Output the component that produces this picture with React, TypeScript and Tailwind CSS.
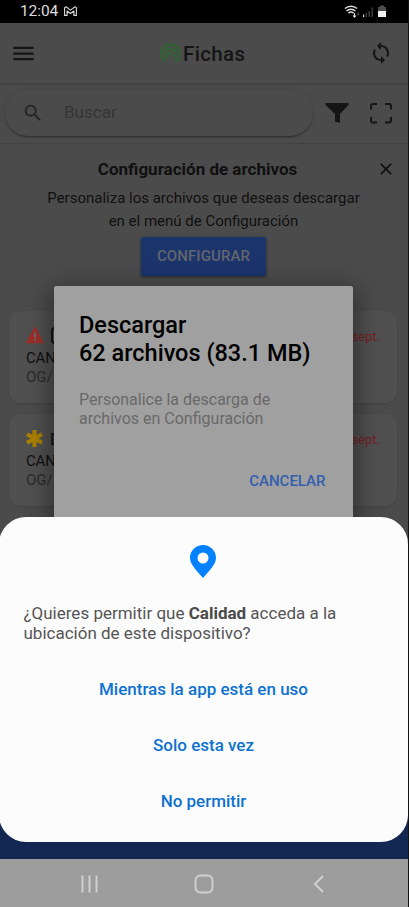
import type { ReactNode } from 'react';
import { MdClose, MdMenu, MdSearch, MdSync, MdWifiTethering } from 'react-icons/md';

const permissionOptions = ['Mientras la app está en uso', 'Solo esta vez', 'No permitir'];

function StatusBar() {
  return (
    <div className="flex h-[23px] shrink-0 items-center bg-black pb-[2px] pl-5 pr-[22px] text-[#dcdcdc]">
      <span className="w-[38px] whitespace-nowrap pt-[2px] text-[15.5px] leading-none tracking-[-0.1px]">12:04</span>
      <svg className="ml-[6px]" width="13" height="10" viewBox="0 0 13 10" fill="none" stroke="currentColor" strokeWidth="1.1" strokeLinejoin="round">
        <path d="M.6 9.4V1.6L2 .7l4.5 3.4L11 .7l1.4.9v7.8H9.9V5L6.5 7.5 3.1 5v4.4z" />
      </svg>
      <svg className="ml-auto" width="43" height="14" viewBox="0 0 43 14" fill="none" stroke="currentColor">
        <path d="M.9 4.6a9 9 0 0 1 12.2 0M2.6 7a6.3 6.3 0 0 1 8.8 0M4.4 9.2a3.8 3.8 0 0 1 5.2 0" strokeWidth="1.4" />
        <path d="M7 11.2h.1M10.5 9v4M9 11.5l1.5 1.7 1.5-1.7" strokeWidth="1.1" />
        <path d="M14.2 8.5v3M13.2 10h2" stroke="#555" strokeWidth="1" />
        <path d="M19.6 10.5V13" strokeWidth="1.2" />
        <path d="M22.4 9v4M25.2 7v6M28.2 3.5V13" stroke="#4b4b4b" strokeWidth="1.2" />
        <path d="M36 1.5h4V3h2v4h-8V3h2z" fill="#4d4d4d" stroke="none" />
        <path d="M34 7h8v6h-8z" fill="#f1f1f1" stroke="none" />
      </svg>
    </div>
  );
}

function AppHeader() {
  return (
    <header className="flex h-[61px] shrink-0 items-center border-b border-[#424242] pl-[10px] pr-[16px] shadow-[0_1px_2px_rgba(0,0,0,0.12)]">
      <MdMenu className="h-[27px] w-[27px]" />
      <div className="ml-[121px] flex items-center">
        <MdWifiTethering className="-mt-[2px] h-[25px] w-[25px] text-[#2f6532]" />
        <h1 className="pt-[2px] text-[20.5px] font-medium leading-6 tracking-[0.35px]">Fichas</h1>
      </div>
      <MdSync className="ml-auto h-6 w-6" />
    </header>
  );
}

function SearchRow() {
  return (
    <div className="flex h-[60px] shrink-0 items-start border-b border-[#424242] pl-[5px] pt-[6px]">
      <div className="flex h-[46px] w-[308px] items-center rounded-full pl-[17px] shadow-[0_2px_2px_-1px_rgba(0,0,0,0.4),0_0_4px_rgba(0,0,0,0.12)]">
        <MdSearch className="h-[22px] w-[22px] text-[#242424]" />
        <span className="ml-5 text-[17px] text-[#353535]">Buscar</span>
      </div>
      <svg className="ml-[12px] mt-[13px]" width="24" height="20" viewBox="0 0 24 20" fill="currentColor">
        <path d="M.5 0h23v2L15 11v9l-5-1.5V11L.5 2z" />
      </svg>
      <svg className="ml-[21px] mt-[13px]" width="22" height="21" viewBox="0 0 22 21" fill="none" stroke="currentColor" strokeWidth="2">
        <path d="M1 6.5V3a2 2 0 0 1 2-2h4M15 1h4a2 2 0 0 1 2 2v3.5M21 14v3.5a2 2 0 0 1-2 2h-4M7 19.5H3a2 2 0 0 1-2-2V14" />
      </svg>
    </div>
  );
}

function ConfigNotice() {
  return (
    <section className="relative flex h-[167px] shrink-0 flex-col items-center pr-[2px] pt-[15px] text-black/80">
      <h2 className="mr-[12px] text-[17px] font-bold leading-5">Configuración de archivos</h2>
      <p className="mt-2 text-center text-[15px] leading-[23px]">
        Personaliza los archivos que deseas descargar
        <br />
        en el menú de Configuración
      </p>
      <button className="mt-[4px] h-[39px] w-[125px] rounded-[2px] bg-[#1b346b] text-[15px] font-medium tracking-[0.1px] text-[#62666f] shadow-[0_1px_3px_rgba(0,0,0,0.5)]">
        CONFIGURAR
      </button>
      <MdClose className="absolute right-[13px] top-[15px] h-[20px] w-[20px]" />
    </section>
  );
}

function FichaCard({ icon, code }: { icon: ReactNode; code: ReactNode }) {
  return (
    <article className="flex h-[92px] justify-between rounded-xl bg-[#505050] pl-[17px] pr-[17px] pt-[14px] shadow-[0_1px_2px_rgba(0,0,0,0.12)]">
      <div>
        <div className="flex h-5 items-center gap-[7px]">
          {icon}
          {code}
        </div>
        <p className="mt-[3px] text-[15px] leading-5 tracking-[-0.2px] text-[#101010]">CANAL</p>
        <p className="text-[15px] leading-[19px] text-[#2b2b2b]">OG/12</p>
      </div>
      <span className="mt-[2px] text-[13px] leading-5 text-[#751f1f]">12 sept.</span>
    </article>
  );
}

function DownloadDialog() {
  return (
    <div className="absolute left-[54px] top-[286px] h-[260px] w-[298.5px] rounded-[2px] bg-[#a0a0a0] pl-[25px] pt-[24.5px] text-black shadow-[0_6px_24px_4px_rgba(0,0,0,0.4)]">
      <h2 className="whitespace-nowrap text-[23.5px] font-medium leading-7">
        Descargar
        <br />
        62 archivos (83.1 MB)
      </h2>
      <p className="mt-[23px] text-[16px] leading-[19px] text-[#696969]">
        Personalice la descarga de
        <br />
        archivos en Configuración
      </p>
      <div className="mt-[43.5px] flex justify-end pr-[27px]">
        <button className="text-[15px] font-medium leading-5 text-[#335eae]">CANCELAR</button>
      </div>
    </div>
  );
}

function PermissionSheet() {
  return (
    <div className="absolute left-[-1px] top-[517px] h-[324.5px] w-[409px] rounded-[27px] bg-[#fcfcfc] pt-[28px]">
      <svg className="ml-[191px]" width="26" height="33" viewBox="0 0 26 33" fill="#0381fe">
        <path fillRule="evenodd" d="M13 0C5.8 0 0 5.7 0 12.8 0 18.5 4.3 23.3 13 33c8.7-9.7 13-14.5 13-20.2C26 5.7 20.2 0 13 0zm0 7.5a5.5 5.5 0 1 1 0 11 5.5 5.5 0 0 1 0-11z" />
      </svg>
      <p className="ml-[24.5px] mt-[24.5px] whitespace-nowrap text-[17px] leading-5 text-[#555]">
        ¿Quieres permitir que <b className="text-[#4a4a4a]">Calidad</b> acceda a la
        <br />
        ubicación de este dispositivo?
      </p>
      <div className="mt-[34.5px] flex flex-col items-center gap-8">
        {permissionOptions.map((option) => (
          <button key={option} className="text-[17px] font-medium leading-6 text-[#0e72d0]">
            {option}
          </button>
        ))}
      </div>
    </div>
  );
}

function NavigationBar() {
  return (
    <nav className="flex h-[48px] w-[408px] shrink-0 items-center bg-[#9d9d9d] pl-[81px] pt-[2px]">
      <svg width="246" height="20" viewBox="0 0 246 20" fill="none" stroke="#d0d0d0" strokeWidth="2">
        <path d="M1.5 1.5v17M8.5 1.5v17M15.5 1.5v17" />
        <rect x="114.5" y="1.5" width="17" height="17" rx="5" />
        <path d="m242 2-8 8 8 8" />
      </svg>
    </nav>
  );
}

export default function App() {
  return (
    <div className="relative flex h-[907px] w-[409px] flex-col overflow-hidden bg-[#4b4b4b] font-[Roboto,sans-serif] text-[#151515]">
      <StatusBar />
      <AppHeader />
      <SearchRow />
      <ConfigNotice />
      <main className="flex flex-1 flex-col gap-[11px] pl-[9px] pr-3">
        <FichaCard
          icon={
            <svg width="18" height="18" viewBox="0 0 18 18">
              <path d="M9 1.5 17 16.5H1z" fill="#9b2f2b" stroke="#9b2f2b" strokeWidth="1.5" strokeLinejoin="round" />
              <path d="M9 6.5v5M9 13v2" stroke="#6f6464" strokeWidth="2" />
            </svg>
          }
          code={<span className="h-[17px] w-3 rounded border-2 border-current" />}
        />
        <FichaCard
          icon={
            <svg width="17" height="17" viewBox="0 0 17 17" stroke="#ac8000" strokeWidth="4.2">
              <path d="M8.5 0v17M1 4.2l15 8.6M16 4.2 1 12.8" />
            </svg>
          }
          code={<span className="pt-[3px] text-[16px] font-medium">D</span>}
        />
      </main>
      <div className="h-[42px] shrink-0 bg-[#122852]" />
      <NavigationBar />
      <DownloadDialog />
      <PermissionSheet />
      <div className="absolute inset-y-0 right-0 w-px bg-[#111]" />
    </div>
  );
}
